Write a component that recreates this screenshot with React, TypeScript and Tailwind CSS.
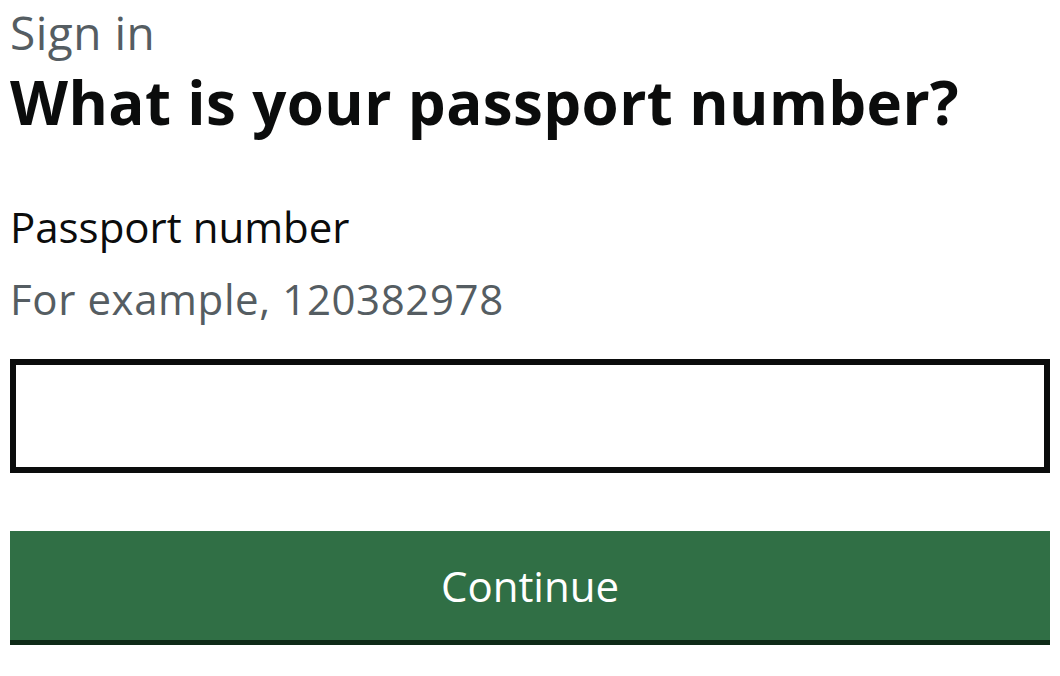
import React from "react";

export default function App() {
  return (
    <div className="w-[1060px] h-[676px] bg-white overflow-hidden pl-[10px] pr-[10px] pt-[1px]" style={{ fontFamily: "'Open Sans', 'Noto Sans', sans-serif" }}>
      <div className="text-[46px] leading-[63px] text-[#555d62] tracking-[0.5px]">Sign in</div>
      <h1 className="text-[60px] leading-[70px] font-bold text-[#0b0c0c] mt-[3px] tracking-[0.4px]">What is your passport number?</h1>
      <label className="block text-[42px] leading-[50px] text-[#0b0c0c] mt-[65px]">Passport number</label>
      <div className="text-[42px] leading-[50px] text-[#555d62] mt-[22px] tracking-[0.6px]">For example, 120382978</div>
      <input aria-label="Passport number" className="block w-[1040px] h-[114px] border-[6px] border-[#0b0c0c] mt-[35px] outline-none" />
      <button className="flex items-center justify-center w-[1040px] h-[109px] mt-[58px] bg-[#306f45] text-white text-[42px] leading-[50px] shadow-[0_5px_0_#0e2a17]">
        Continue
      </button>
    </div>
  );
}
